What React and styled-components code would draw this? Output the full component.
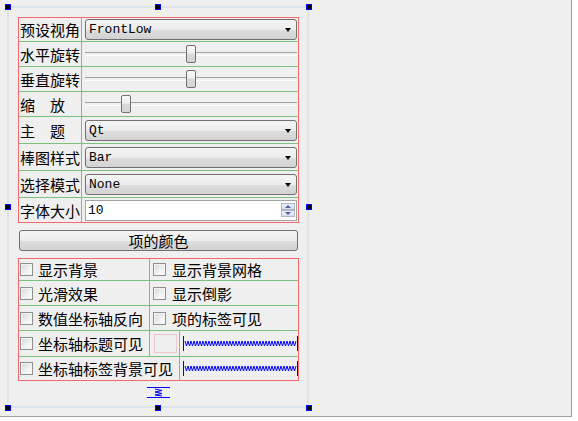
import React from 'react';
import styled, { createGlobalStyle } from 'styled-components';

const GlobalStyle = createGlobalStyle`
  html, body { margin: 0; padding: 0; background: #ffffff; }
  body { font-family: "Noto Sans CJK SC", "Noto Sans", sans-serif; color: #000; }
  * { box-sizing: border-box; }
`;

const Window = styled.div`
  width: 572px;
  height: 417px;
  background: #efefef;
  border-right: 1px solid #a0a0a0;
  border-bottom: 1px solid #a0a0a0;
  padding: 6px 0 0 7px;
  overflow: hidden;
`;

const Form = styled.div`
  position: relative;
  width: 302px;
  height: 402px;
  border: 2px solid #dce4eb;
  padding: 9px 0 0 9px;
  display: flex;
  flex-direction: column;
`;

const Handle = styled.div`
  position: absolute;
  left: ${p => p.$x}px;
  top: ${p => p.$y}px;
  width: 6px;
  height: 6px;
  background: #000;
  border: 1px solid #0000ff;
`;

const Grid = styled.div`
  width: 281px;
  border: 1px solid #f46a6a;
  display: flex;
  flex-direction: column;
`;

const Row = styled.div`
  display: grid;
  grid-template-columns: ${p => p.$cols};
  height: ${p => p.$h}px;
  border-bottom: ${p => (p.$last ? 'none' : '1px solid #79c279')};
`;

const Label = styled.div`
  display: flex;
  align-items: center;
  padding-left: 1px;
  font-size: 15px;
  line-height: 1;
  white-space: pre;
  border-right: 1px solid #79c279;
`;

const Cell = styled.div`
  display: flex;
  align-items: center;
  padding-left: ${p => p.$pad || 0}px;
  border-right: ${p => (p.$line ? '1px solid #79c279' : 'none')};
  min-width: 0;
`;

const Combo = styled.div`
  width: 212px;
  height: 21px;
  border: 1px solid #707070;
  border-radius: 3px;
  background: linear-gradient(#f4f4f4, #ececec 50%, #dedede 52%, #d2d2d2);
  display: flex;
  align-items: center;
  justify-content: space-between;
  padding: 0 5px 0 3px;
  font-family: "Liberation Mono", monospace;
  font-size: 13px;
`;

const Arrow = styled.span`
  width: 0;
  height: 0;
  border-left: 3.5px solid transparent;
  border-right: 3.5px solid transparent;
  border-top: 4px solid #000;
  margin-top: 1px;
`;

const SliderTrack = styled.div`
  position: relative;
  width: 212px;
  height: 100%;
  &::before {
    content: '';
    position: absolute;
    left: 0;
    right: 0;
    top: 10px;
    height: 2px;
    border-top: 1px solid #a2a2a2;
    border-bottom: 1px solid #ffffff;
  }
`;

const SliderHandle = styled.div`
  position: absolute;
  top: 3px;
  width: 10px;
  height: 18px;
  border: 1px solid #707070;
  border-radius: 2px;
  background: linear-gradient(#f8f8f8, #eeeeee 45%, #dadada 50%, #d6d6d6);
`;

const Spin = styled.div`
  width: 212px;
  height: 21px;
  border: 1px solid #a3a3a3;
  background: #fff;
  display: flex;
  align-items: center;
  justify-content: space-between;
  padding: 0 1px 0 2px;
  font-family: "Liberation Mono", monospace;
  font-size: 13px;
`;

const SpinButtons = styled.div`
  display: flex;
  flex-direction: column;
  width: 14px;
`;

const SpinButton = styled.div`
  height: 7px;
  border: 1px solid #b2b8c6;
  background: linear-gradient(#eef1f8, #d8dded);
  display: flex;
  align-items: center;
  justify-content: center;
  & + & { margin-top: 0px; }
  &::after {
    content: '';
    border-left: 3px solid transparent;
    border-right: 3px solid transparent;
    ${p => (p.$up ? 'border-bottom: 3px solid #4c5cae;' : 'border-top: 3px solid #4c5cae;')}
  }
`;

const PushButton = styled.div`
  width: 279px;
  height: 21px;
  margin: 7px 0 7px 1px;
  border: 1px solid #707070;
  border-radius: 3px;
  background: linear-gradient(#f4f4f4, #ececec 50%, #dedede 52%, #d2d2d2);
  display: flex;
  align-items: center;
  justify-content: center;
  font-size: 15px;
  line-height: 1;
`;

const Box = styled.span`
  flex: none;
  width: 13px;
  height: 13px;
  border: 1px solid #8e8f8f;
  background: linear-gradient(135deg, #d6d6d6, #f2f2f2 60%, #ffffff);
  box-shadow: inset 0 0 0 1px #f4f4f4;
`;

const CheckText = styled.span`
  font-size: 15px;
  line-height: 1;
  margin-left: ${p => p.$gap}px;
  white-space: nowrap;
`;

const Swatch = styled.div`
  width: 23px;
  height: 19px;
  border: 1px solid #ebc7c7;
  background: #efefef;
`;

const Center = styled.div`
  width: 281px;
  display: flex;
  justify-content: center;
  margin-top: 6px;
`;

function Check({ text, pad = 1, gap = 5 }) {
  return (
    <>
      <Box style={{ marginLeft: pad }} />
      <CheckText $gap={gap}>{text}</CheckText>
    </>
  );
}

function SpringH({ w = 115, h = 15 }) {
  let d = 'M2 4';
  for (let x = 2; x < w - 4; x += 3) {
    d += ` L${x + 1.5} 9 L${x + 3} 4`;
  }
  return (
    <svg width={w} height={h} style={{ marginLeft: 3, display: 'block' }}>
      <line x1="0.5" y1="0" x2="0.5" y2={h} stroke="#0000ff" />
      <line x1={w - 0.5} y1="0" x2={w - 0.5} y2={h} stroke="#0000ff" />
      <path d={d} transform="translate(0 1)" fill="none" stroke="#0000ff" strokeWidth="1" />
    </svg>
  );
}

function SpringV() {
  return (
    <svg width="23" height="11" style={{ display: 'block' }}>
      <line x1="0" y1="0.5" x2="23" y2="0.5" stroke="#0000ff" />
      <line x1="0" y1="10.5" x2="23" y2="10.5" stroke="#0000ff" />
      <path d="M8 2 L15 3.5 L8 5 L15 6.5 L8 8 L15 9" fill="none" stroke="#0000ff" />
    </svg>
  );
}

function Slider({ value }) {
  return (
    <SliderTrack>
      <SliderHandle style={{ left: `${Math.round(value * 202)}px` }} />
    </SliderTrack>
  );
}

const topRows = [
  { label: '预设视角', h: 23, kind: 'combo', value: 'FrontLow' },
  { label: '水平旋转', h: 24, kind: 'slider', value: 0.5 },
  { label: '垂直旋转', h: 24, kind: 'slider', value: 0.5 },
  { label: '缩\u3000放', h: 24, kind: 'slider', value: 0.18 },
  { label: '主\u3000题', h: 26, kind: 'combo', value: 'Qt' },
  { label: '棒图样式', h: 26, kind: 'combo', value: 'Bar' },
  { label: '选择模式', h: 26, kind: 'combo', value: 'None' },
  { label: '字体大小', h: 24, kind: 'spin', value: '10' },
];

export default function App() {
  return (
    <>
      <GlobalStyle />
      <Window>
        <Form>
          <Handle $x={-4} $y={-4} />
          <Handle $x={146} $y={-4} />
          <Handle $x={297} $y={-4} />
          <Handle $x={-4} $y={196} />
          <Handle $x={297} $y={196} />
          <Handle $x={-4} $y={397} />
          <Handle $x={146} $y={397} />
          <Handle $x={297} $y={397} />

          <Grid>
            {topRows.map((r, i) => (
              <Row key={r.label} $cols="63px 1fr" $h={r.h + (i === topRows.length - 1 ? 0 : 1)} $last={i === topRows.length - 1}>
                <Label>{r.label}</Label>
                <Cell $pad={3}>
                  {r.kind === 'combo' && (
                    <Combo>
                      <span>{r.value}</span>
                      <Arrow />
                    </Combo>
                  )}
                  {r.kind === 'slider' && <Slider value={r.value} />}
                  {r.kind === 'spin' && (
                    <Spin>
                      <span>{r.value}</span>
                      <SpinButtons>
                        <SpinButton $up />
                        <SpinButton />
                      </SpinButtons>
                    </Spin>
                  )}
                </Cell>
              </Row>
            ))}
          </Grid>

          <PushButton>项的颜色</PushButton>

          <Grid>
            <Row $cols="131px 1fr" $h={22}>
              <Cell $line><Check text="显示背景" /></Cell>
              <Cell><Check text="显示背景网格" pad={3} gap={6} /></Cell>
            </Row>
            <Row $cols="131px 1fr" $h={25}>
              <Cell $line><Check text="光滑效果" /></Cell>
              <Cell><Check text="显示倒影" pad={3} gap={6} /></Cell>
            </Row>
            <Row $cols="131px 1fr" $h={25}>
              <Cell $line><Check text="数值坐标轴反向" /></Cell>
              <Cell><Check text="项的标签可见" pad={3} gap={6} /></Cell>
            </Row>
            <Row $cols="131px 30px 1fr" $h={26}>
              <Cell $line><Check text="坐标轴标题可见" /></Cell>
              <Cell $line $pad={4}><Swatch /></Cell>
              <Cell><SpringH /></Cell>
            </Row>
            <Row $cols="161px 1fr" $h={23} $last>
              <Cell $line><Check text="坐标轴标签背景可见" /></Cell>
              <Cell><SpringH /></Cell>
            </Row>
          </Grid>

          <Center>
            <SpringV />
          </Center>
        </Form>
      </Window>
    </>
  );
}
